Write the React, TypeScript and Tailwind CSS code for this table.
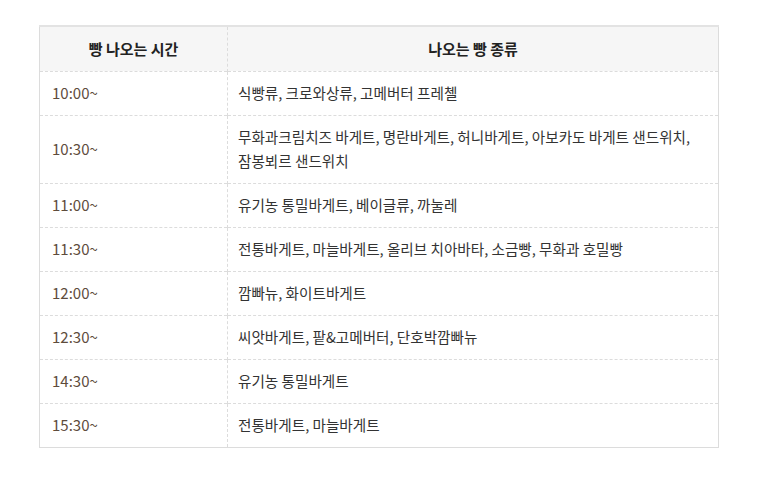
const rows: { time: string; items: string[] }[] = [
  { time: "10:00~", items: ["식빵류, 크로와상류, 고메버터 프레첼"] },
  {
    time: "10:30~",
    items: ["무화과크림치즈 바게트, 명란바게트, 허니바게트, 아보카도 바게트 샌드위치,", "잠봉뵈르 샌드위치"],
  },
  { time: "11:00~", items: ["유기농 통밀바게트, 베이글류, 까눌레"] },
  { time: "11:30~", items: ["전통바게트, 마늘바게트, 올리브 치아바타, 소금빵, 무화과 호밀빵"] },
  { time: "12:00~", items: ["깜빠뉴, 화이트바게트"] },
  { time: "12:30~", items: ["씨앗바게트, 팥&고메버터, 단호박깜빠뉴"] },
  { time: "14:30~", items: ["유기농 통밀바게트"] },
  { time: "15:30~", items: ["전통바게트, 마늘바게트"] },
];

export default function App() {
  return (
    <div
      className="min-h-screen bg-white pl-[39px] pt-[25px]"
      style={{ fontFamily: '"Noto Sans CJK KR", "Noto Sans", sans-serif' }}
    >
      <table className="w-[680px] border-collapse border-x border-b border-[#dcdcdc] border-t-2 border-t-[#e3e3e3] text-[15px] leading-[24px] text-[#333]">
        <thead>
          <tr className="bg-[#f6f6f6]">
            <th className="w-[188px] h-[45px] p-0 border-r border-dashed border-[#dcdcdc] font-semibold text-[#222]">
              빵 나오는 시간
            </th>
            <th className="h-[45px] p-0 font-semibold text-[#222]">나오는 빵 종류</th>
          </tr>
        </thead>
        <tbody>
          {rows.map((r) => (
            <tr key={r.time} className="border-t border-dashed border-[#dcdcdc]">
              <td className="border-r border-dashed border-[#dcdcdc] px-3 py-[9.5px] text-[#5e4c3c]">
                {r.time}
              </td>
              <td className="pl-[10px] pr-3 py-[9.5px] text-[14.6px]">
                {r.items.map((t) => (
                  <div key={t}>{t}</div>
                ))}
              </td>
            </tr>
          ))}
        </tbody>
      </table>
    </div>
  );
}
